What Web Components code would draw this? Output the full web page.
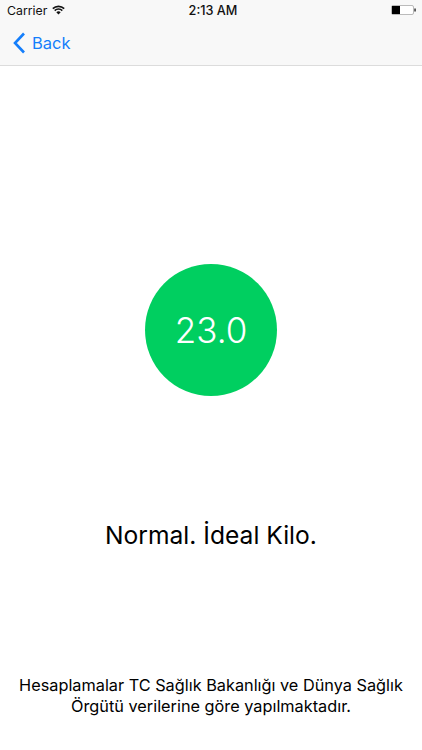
<!DOCTYPE html>
<html>
<head>
<meta charset="utf-8">
<title>Sonuç</title>
<style>
  html, body { margin: 0; padding: 0; background: #fff; }
  body { width: 422px; height: 750px; overflow: hidden; font-family: "Inter", "Liberation Sans", sans-serif; }
</style>
</head>
<body>
<result-screen>
  <nav-header slot="top" label="Back"></nav-header>
  <score-badge value="23.0"></score-badge>
  <span slot="status">Normal. İdeal Kilo.</span>
  <span slot="note">Hesaplamalar TC Sağlık Bakanlığı ve Dünya Sağlık<br>Örgütü verilerine göre yapılmaktadır.</span>
</result-screen>

<script>
class StatusBar extends HTMLElement {
  constructor() {
    super();
    this.root = this.attachShadow({ mode: "open" });
    this.root.innerHTML = `
      <style>
        :host {
          display: grid;
          grid-template-columns: 1fr auto 1fr;
          align-items: center;
          height: 20px;
          padding: 0 6px 0 7px;
          font: 12.3px "Inter", "Liberation Sans", sans-serif;
          color: #111;
        }
        .left { display: flex; align-items: center; gap: 5px; }
        .right { display: flex; justify-content: flex-end; }
        .time { font-size: 12.7px; font-weight: 500; margin-left: 3px; }
        svg { display: block; }
      </style>
      <div class="left">
        <span>Carrier</span>
        <svg width="13" height="10" viewBox="0 0 13 10">
          <path d="M.8 3.7a8.2 8.2 0 0 1 11.4 0M2.7 5.6a5.4 5.4 0 0 1 7.6 0" fill="none" stroke="#111" stroke-width="1.6"/>
          <path d="M4.3 7.2a3.2 3.2 0 0 1 4.4 0L6.5 9.6z" fill="#111"/>
        </svg>
      </div>
      <span class="time">2:13 AM</span>
      <div class="right">
        <svg width="25" height="10" viewBox="0 0 25 10">
          <rect x="0.5" y="0.5" width="22" height="9" rx="1.5" fill="#fff" stroke="#aaa" stroke-width="0.8"/>
          <rect x="1" y="1" width="8" height="8" fill="#000"/>
          <rect x="23.3" y="3.5" width="1.5" height="3" fill="#333"/>
        </svg>
      </div>
    `;
  }
}

class NavHeader extends HTMLElement {
  constructor() {
    super();
    this.root = this.attachShadow({ mode: "open" });
    this.root.innerHTML = `
      <style>
        :host {
          display: block;
          background: #f8f8f8;
          border-bottom: 1px solid #dcdcdc;
        }
        .bar {
          display: flex;
          align-items: center;
          gap: 6px;
          height: 45px;
          padding-left: 13px;
          color: #147efb;
          font: 16.5px "Inter", "Liberation Sans", sans-serif;
        }
        svg { display: block; }
      </style>
      <status-bar></status-bar>
      <div class="bar">
        <svg width="13" height="22" viewBox="0 0 13 22">
          <path d="M11 1.5 2 11l9 9.5" fill="none" stroke="#147efb" stroke-width="2.6"/>
        </svg>
        <span></span>
      </div>
    `;
    this.root.querySelector("span").textContent = this.getAttribute("label");
  }
}

class ScoreBadge extends HTMLElement {
  constructor() {
    super();
    this.root = this.attachShadow({ mode: "open" });
    this.root.innerHTML = `
      <style>
        :host {
          display: flex;
          align-items: center;
          justify-content: center;
          width: 132px;
          height: 132px;
          border-radius: 50%;
          background: #00cf60;
          color: #fff;
          font: 300 35px "Inter", "Liberation Sans", sans-serif;
        }
      </style>
      <span></span>
    `;
    this.root.querySelector("span").textContent = this.getAttribute("value");
  }
}

class ResultScreen extends HTMLElement {
  constructor() {
    super();
    this.root = this.attachShadow({ mode: "open" });
    this.root.innerHTML = `
      <style>
        :host {
          display: flex;
          flex-direction: column;
          height: 750px;
          color: #000;
        }
        .badge { display: flex; justify-content: center; padding-top: 198px; }
        .status {
          padding-top: 124px;
          text-align: center;
          font-size: 24.6px;
          line-height: 30px;
        }
        .note {
          padding-top: 125px;
          text-align: center;
          font-size: 16.3px;
          line-height: 21px;
        }
      </style>
      <slot name="top"></slot>
      <div class="badge"><slot></slot></div>
      <div class="status"><slot name="status"></slot></div>
      <div class="note"><slot name="note"></slot></div>
    `;
  }
}

customElements.define("status-bar", StatusBar);
customElements.define("nav-header", NavHeader);
customElements.define("score-badge", ScoreBadge);
customElements.define("result-screen", ResultScreen);
</script>
</body>
</html>
